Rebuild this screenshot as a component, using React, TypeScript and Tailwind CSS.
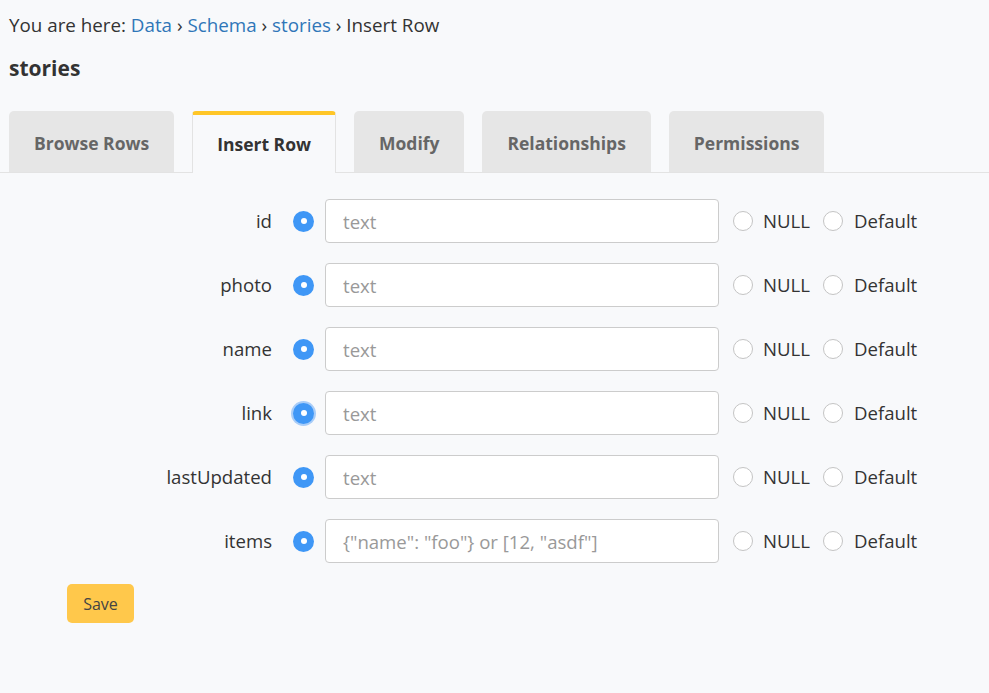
import React, { useState } from "react";

const tabs = ["Browse Rows", "Insert Row", "Modify", "Relationships", "Permissions"];

const columns = [
  { name: "id", placeholder: "text" },
  { name: "photo", placeholder: "text" },
  { name: "name", placeholder: "text" },
  { name: "link", placeholder: "text", focus: true },
  { name: "lastUpdated", placeholder: "text" },
  { name: "items", placeholder: '{"name": "foo"} or [12, "asdf"]' },
];

const Radio = ({ checked, focus }: { checked?: boolean; focus?: boolean }) =>
  checked ? (
    <span
      className={
        "flex h-[21px] w-[21px] shrink-0 items-center justify-center rounded-full bg-[#3f97f6] " +
        (focus ? "shadow-[0_0_0_2px_#a9cdf8]" : "")
      }
    >
      <span className="h-[6px] w-[6px] rounded-full bg-white" />
    </span>
  ) : (
    <span className="h-[20px] w-[20px] shrink-0 rounded-full border border-[#c4c4c4] bg-white" />
  );

export default function App() {
  const [active] = useState(1);

  return (
    <div
      className="min-h-[693px] w-full bg-[#f8f9fb] text-[#333]"
      style={{ fontFamily: '"Open Sans", "Noto Sans", sans-serif' }}
    >
      {/* breadcrumb */}
      <div className="px-[9px] pt-[12px] text-[18.8px] leading-[26px] text-[#333]">
        You are here: <span className="text-[#2f76b8]">Data</span> ›{" "}
        <span className="text-[#2f76b8]">Schema</span> ›{" "}
        <span className="text-[#2f76b8]">stories</span> › Insert Row
      </div>
      <h1 className="px-[9px] pt-[16px] text-[21px] font-bold leading-[28px] text-[#333]">stories</h1>

      {/* tabs */}
      <div className="mt-[29px] flex gap-[18px] border-b border-[#e3e3e3] px-[9px]">
        {tabs.map((t, i) =>
          i === active ? (
            <div
              key={t}
              className="-mb-px flex h-[62px] items-center rounded-t-[4px] border-x border-t-[4px] border-x-[#e3e3e3] border-t-[#ffc627] bg-[#f8f9fb] px-[24px] text-[17.5px] font-bold text-[#333]"
            >
              {t}
            </div>
          ) : (
            <div
              key={t}
              className="flex h-[61px] items-center rounded-t-[5px] bg-[#e6e6e6] px-[25px] pt-[4px] text-[17.5px] font-bold text-[#666]"
            >
              {t}
            </div>
          )
        )}
      </div>

      {/* form */}
      <div className="flex flex-col gap-[20px] pt-[26px]">
        {columns.map((c) => (
          <div key={c.name} className="flex items-center">
            <div className="w-[272px] pb-[1px] text-right text-[18.6px] text-[#333]">{c.name}</div>
            <div className="ml-[21px] mr-[11px]">
              <Radio checked focus={c.focus} />
            </div>
            <input
              placeholder={c.placeholder}
              className="h-[44px] w-[394px] rounded-[4px] border border-[#ccc] bg-white px-[17px] text-[18.6px] text-[#333] outline-none placeholder:text-[#999]"
            />
            <div className="ml-[14px] flex items-center">
              <Radio />
              <span className="ml-[10px] text-[18.6px] text-[#333]">NULL</span>
            </div>
            <div className="ml-[13px] flex items-center">
              <Radio />
              <span className="ml-[11px] text-[18.6px] text-[#333]">Default</span>
            </div>
          </div>
        ))}
      </div>

      <div className="px-[67px] pt-[21px]">
        <button className="h-[39px] w-[67px] rounded-[5px] bg-[#ffc84b] text-[16px] text-[#444]">Save</button>
      </div>
    </div>
  );
}
